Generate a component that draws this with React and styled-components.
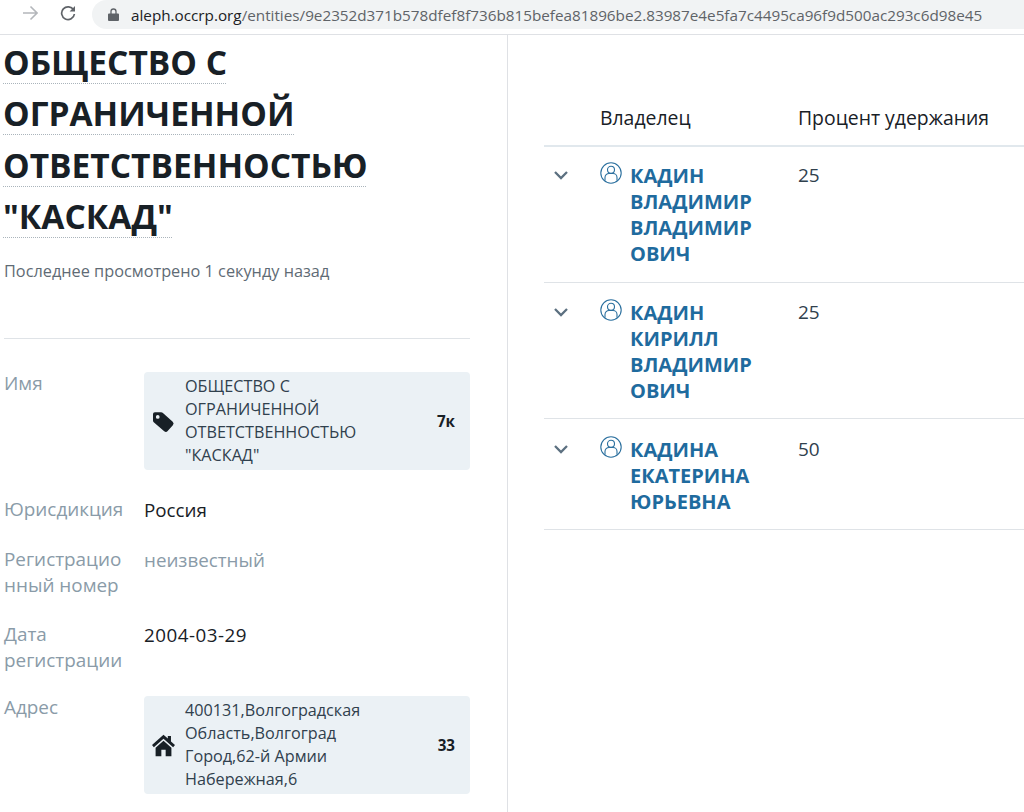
import React from 'react';
import styled, { createGlobalStyle } from 'styled-components';

const Global = createGlobalStyle`
  html, body { margin: 0; padding: 0; background: #fff; overflow: hidden; }
  body { font-family: "Open Sans", "Noto Sans", sans-serif; color: #182026; }
  * { box-sizing: border-box; }
`;
const Page = styled.div`width: 1024px; height: 812px; overflow: hidden; display: flex; flex-direction: column;`;
const BrowserBar = styled.header`
  height: 35px; flex: none; display: flex; align-items: flex-start; border-bottom: 1px solid #dfe1e5; padding-left: 22px;
`;
const NavIcon = styled.svg`width: 16px; height: 16px; margin-top: 5px; margin-right: ${p => p.$gap}px; flex: none;`;
const UrlPill = styled.div`
  flex: 1; height: 29px; background: #f1f3f4; border-radius: 15px 0 0 15px; display: flex; align-items: center; padding-left: 16px;
  font-size: 15.25px; color: #5f6368; white-space: nowrap; overflow: hidden;
`;
const Host = styled.span`color: #202124;`;
const Lock = styled.svg`width: 11px; height: 13px; margin-right: 12px; flex: none;`;
const Columns = styled.main`flex: 1; display: flex; min-height: 0;`;
const Left = styled.section`width: 508px; flex: none; border-right: 1px solid #dfe1e5; padding: 0 37px 0 4px; overflow: hidden;`;
const Title = styled.h1`margin: 0 0 0 -1px; font-size: 33.5px; font-weight: 700; line-height: 51.3px; color: #182026; padding-top: 2px;`;
const TitleText = styled.span`
  text-decoration: underline dotted #aab4bb 1px; text-underline-offset: 8px; text-decoration-skip-ink: none;
`;
const Seen = styled.p`margin: 19px 0 0; font-size: 16.3px; line-height: 20px; color: #5f6b75; height: 78px; border-bottom: 1px solid #dfe3e7; white-space: nowrap;`;
const Facts = styled.div`display: flex; flex-direction: column; padding-top: 31px;`;
const Fact = styled.div`display: grid; grid-template-columns: 140px 1fr; margin-bottom: ${p => p.$mb}px;`;
const Label = styled.div`font-size: 18.9px; line-height: 26px; color: #8a9ba8; white-space: nowrap;`;
const Value = styled.div`font-size: 18.8px; line-height: 26px; padding-top: 1px; letter-spacing: ${p => p.$tracking || 0}px; color: ${p => p.$muted ? '#8a9ba8' : '#182026'};`;
const Chip = styled.div`
  display: flex; align-items: center; background: #ebf1f5; border-radius: 4px; height: 98px; padding: 0 15px 0 8px; margin-top: 2px;
`;
const ChipIcon = styled.svg`width: 23px; height: 23px; flex: none; margin-right: 10px; color: #182026;`;
const ChipText = styled.div`flex: 1; font-size: 16.2px; line-height: 23.2px; color: #30404d; white-space: nowrap;`;
const ChipCount = styled.div`font-size: 15.2px; font-weight: 700; color: #182026;`;
const Right = styled.section`flex: 1; padding: 70px 0 0 36px; min-width: 0;`;
const HeadRow = styled.div`display: grid; grid-template-columns: 56px 198px 1fr; height: 42px; border-bottom: 2px solid #e1e8ed;`;
const HeadCell = styled.div`font-size: 19.4px; font-weight: 500; line-height: 26px; color: #182026; white-space: nowrap;`;
const Row = styled.div`display: grid; grid-template-columns: 56px 198px 1fr; height: ${p => p.$h}px; border-bottom: 1px solid #dfe3e7; padding-top: ${p => p.$pt}px;`;
const Chevron = styled.svg`width: 16px; height: 16px; margin: 5px 0 0 9px; color: #5c7080;`;
const Owner = styled.div`display: flex; align-items: flex-start;`;
const Person = styled.svg`width: 22px; height: 22px; flex: none; margin-right: 8px; color: #2a6f9e;`;
const OwnerName = styled.a`font-size: 20px; font-weight: 700; line-height: 26px; color: #1f6b9e; width: 124px; margin-top: 1px; text-decoration: none;`;
const Percent = styled.div`font-size: 19px; line-height: 26px; color: #30404d;`;

const owners = [
  { lines: ['КАДИН', 'ВЛАДИМИР', 'ВЛАДИМИР', 'ОВИЧ'], pct: 25, h: 136, pt: 15 },
  { lines: ['КАДИН', 'КИРИЛЛ', 'ВЛАДИМИР', 'ОВИЧ'], pct: 25, h: 136, pt: 16 },
  { lines: ['КАДИНА', 'ЕКАТЕРИНА', 'ЮРЬЕВНА'], pct: 50, h: 111, pt: 17 },
];

export default function App() {
  return (
    <Page>
      <Global />
      <BrowserBar>
        <NavIcon $gap={22} viewBox="0 0 16 16" fill="none" stroke="#b4b7bb" strokeWidth="1.6"><path d="M1 8h14M8.5 1.5 15 8l-6.5 6.5" /></NavIcon>
        <NavIcon $gap={16} viewBox="0 0 16 16" fill="none" stroke="#5f6368" strokeWidth="1.7"><path d="M13.6 5A6.4 6.4 0 1 0 14.4 9" /><path d="M15 1v5.4H9.6z" fill="#5f6368" stroke="none" /></NavIcon>
        <UrlPill>
          <Lock viewBox="0 0 11 13"><path d="M1 5.5h9a1 1 0 0 1 1 1V12a1 1 0 0 1-1 1H1a1 1 0 0 1-1-1V6.500a1 1 0 0 1 1-1z" fill="#5f6368" /><path d="M3 6V3.500a2.500 2.500 0 0 1 5 0V6" fill="none" stroke="#5f6368" strokeWidth="1.300" /></Lock>
          <span><Host>aleph.occrp.org</Host>/entities/9e2352d371b578dfef8f736b815befea81896be2.83987e4e5fa7c4495ca96f9d500ac293c6d98e45</span>
        </UrlPill>
      </BrowserBar>
      <Columns>
        <Left>
          <Title>
            <TitleText>ОБЩЕСТВО С</TitleText><br />
            <TitleText>ОГРАНИЧЕННОЙ</TitleText><br />
            <TitleText>ОТВЕТСТВЕННОСТЬЮ</TitleText><br />
            <TitleText>"КАСКАД"</TitleText>
          </Title>
          <Seen>Последнее просмотрено 1 секунду назад</Seen>
          <Facts>
            <Fact $mb={26}>
              <Label>Имя</Label>
              <Chip>
                <ChipIcon viewBox="0 0 16 16" fill="currentColor"><path fillRule="evenodd" d="M2 1.500h4.300a1.500 1.500 0 0 1 1.100.4l7 6.300a1.700 1.700 0 0 1 .1 2.400l-3.600 4a1.700 1.700 0 0 1-2.400.1L1.200 8.600a1.500 1.500 0 0 1-.5-1.100V2.800A1.300 1.300 0 0 1 2 1.500zM4 3.500a1.300 1.300 0 1 0 0 2.600 1.300 1.300 0 0 0 0-2.600z" /></ChipIcon>
                <ChipText>ОБЩЕСТВО С<br />ОГРАНИЧЕННОЙ<br />ОТВЕТСТВЕННОСТЬЮ<br />"КАСКАД"</ChipText>
                <ChipCount>7к</ChipCount>
              </Chip>
            </Fact>
            <Fact $mb={23}>
              <Label>Юрисдикция</Label>
              <Value>Россия</Value>
            </Fact>
            <Fact $mb={23}>
              <Label>Регистрацио<br />нный номер</Label>
              <Value $muted>неизвестный</Value>
            </Fact>
            <Fact $mb={21}>
              <Label>Дата<br />регистрации</Label>
              <Value $tracking={0.5}>2004-03-29</Value>
            </Fact>
            <Fact $mb={0}>
              <Label>Адрес</Label>
              <Chip>
                <ChipIcon viewBox="0 0 16 16" fill="currentColor"><path d="M8 .6 0 7.700l1.300 1.500L8 3.300l6.700 5.900L16 7.700l-2.800-2.500V1.400h-2.200v1.800L8 .6zM8 4.700 2.500 9.500V15.400h4V11h3v4.400h4V9.500L8 4.700z" /></ChipIcon>
                <ChipText>400131,Волгоградская<br />Область,Волгоград<br />Город,62-й Армии<br />Набережная,6</ChipText>
                <ChipCount>33</ChipCount>
              </Chip>
            </Fact>
          </Facts>
        </Left>
        <Right>
          <HeadRow>
            <div />
            <HeadCell>Владелец</HeadCell>
            <HeadCell>Процент удержания</HeadCell>
          </HeadRow>
          {owners.map((o, i) => (
            <Row key={i} $h={o.h} $pt={o.pt}>
              <Chevron viewBox="0 0 16 16" fill="none" stroke="currentColor" strokeWidth="2.300"><path d="M2 5l6 6 6-6" /></Chevron>
              <Owner>
                <Person viewBox="0 0 22 22" fill="none" stroke="currentColor" strokeWidth="1.100"><circle cx="11" cy="11" r="10.200" /><circle cx="11" cy="7.800" r="3.500" /><path d="M5 18.500v-3a4 4 0 0 1 4-4h4a4 4 0 0 1 4 4v3" /></Person>
                <OwnerName href="#">{o.lines.map((l, j) => <React.Fragment key={j}>{l}<br /></React.Fragment>)}</OwnerName>
              </Owner>
              <Percent>{o.pct}</Percent>
            </Row>
          ))}
        </Right>
      </Columns>
    </Page>
  );
}
